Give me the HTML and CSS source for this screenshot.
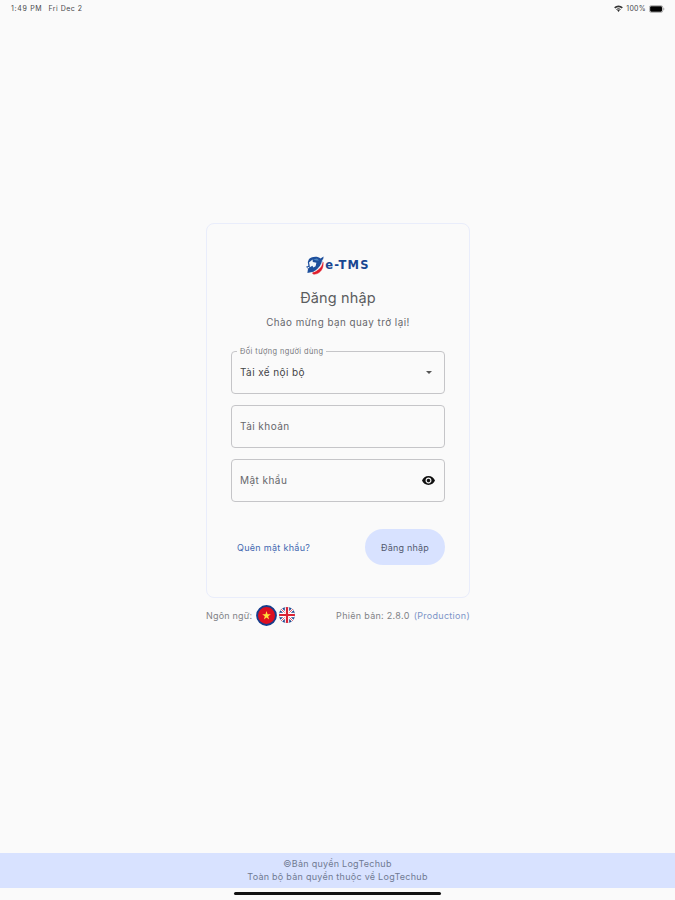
FILE: index.html
```html
<!DOCTYPE html>
<html lang="vi">
<head>
    <meta charset="UTF-8">
    <meta name="viewport" content="width=device-width, initial-scale=1.0">
    <title>e-TMS - Đăng nhập</title>
    <link rel="stylesheet" href="styles.css">
</head>
<body>
    <header class="status-bar">
        <div class="status-left">
            <span class="time">1:49 PM</span>
            <span class="date">Fri Dec 2</span>
        </div>
        <div class="status-right">
            <svg class="wifi" viewBox="0 0 16 12">
                <path d="M8 12 5.6 9.3a3.5 3.5 0 0 1 4.8 0zM3.8 7.6a6.2 6.2 0 0 1 8.4 0l-1 1.1a4.7 4.7 0 0 0-6.4 0zM.2 3.7a11.4 11.4 0 0 1 15.6 0l-2.2 2.5a8.2 8.2 0 0 0-11.2 0z"/>
            </svg>
            <span>100%</span>
            <svg class="battery" viewBox="0 0 17 8">
                <rect x=".4" y=".4" width="14.2" height="7.2" rx="2" fill="none" stroke="#888" stroke-width=".7"/>
                <rect x="1.2" y="1.2" width="12.6" height="5.6" rx="1.2"/>
                <path d="M15.4 2.6c1.2.4 1.2 2.4 0 2.8z" fill="#888"/>
            </svg>
        </div>
    </header>

    <main class="login">
        <form class="card">
            <div class="logo">
                <svg class="logo-mark" viewBox="0 0 18 19">
                    <path d="M3 3C6.500 0 12 0 14.500 2.600L17.600.6c-.4 2.600-.8 5-2 7.200C14 11 11.500 13.500 8.600 15.600L1.400 17l.6-4.200L0 10.800l2.400-1L1.800 6z" fill="#1d4f9c"/>
                    <path d="M3 6.400 6.600 3.600 6.800 6l3.600.8-.8 3.400-2.200 1.200-1-1.600-2.600 1.400L3.600 9z" fill="#f0f5fb"/>
                    <path d="m1 10.800 2.400.4-.8 1.400z" fill="#fafafa"/>
                    <path d="M7 3.600 11 2.400l2.200 2-2.600.2z" fill="#4f87c2"/>
                    <path d="M17 6C16.400 11 12.400 15 6.800 16.600c-.6.8 0 1.600 1.400 1.600C14.500 17.800 18 12 17 6z" fill="#e11d2b" stroke="#e11d2b" stroke-width=".5"/>
                    <path d="M16.600 3.600C15.800 9.200 12.600 13.200 7.800 15.800" fill="none" stroke="#fff" stroke-width=".8"/>
                </svg>
                <span class="logo-text">e-TMS</span>
            </div>
            <h1>Đăng nhập</h1>
            <p class="welcome">Chào mừng bạn quay trở lại!</p>

            <div class="field select-field">
                <span class="field-label">Đối tượng người dùng</span>
                <span class="field-value">Tài xế nội bộ</span>
                <svg class="arrow" viewBox="0 0 6 3"><path d="M0 0h6L3 3z"/></svg>
            </div>
            <div class="field">
                <span class="placeholder">Tài khoản</span>
            </div>
            <div class="field">
                <span class="placeholder">Mật khẩu</span>
                <svg class="eye" viewBox="1 4.5 22 15">
                    <path d="M12 4.5C7 4.5 2.73 7.61 1 12c1.73 4.39 6 7.5 11 7.5s9.27-3.11 11-7.5c-1.73-4.39-6-7.5-11-7.5zM12 17c-2.76 0-5-2.24-5-5s2.24-5 5-5 5 2.24 5 5-2.24 5-5 5zm0-8c-1.66 0-3 1.34-3 3s1.34 3 3 3 3-1.34 3-3-1.34-3-3-3z"/>
                </svg>
            </div>

            <div class="actions">
                <a class="forgot">Quên mật khẩu?</a>
                <button type="button" class="login-btn">Đăng nhập</button>
            </div>
        </form>

        <div class="meta">
            <div class="languages">
                <span class="lang-label">Ngôn ngữ:</span>
                <svg class="flag-vn" viewBox="0 0 20 20">
                    <circle cx="10" cy="10" r="9" fill="#dd0f20" stroke="#163d8c" stroke-width="1.8"/>
                    <path d="m10 5.8 1 3h3.1l-2.5 1.9.9 3-2.5-1.8-2.5 1.8.9-3-2.5-1.9H9z" fill="#ffe03b"/>
                </svg>
                <svg class="flag-uk" viewBox="0 0 16 16">
                    <clipPath id="round"><circle cx="8" cy="8" r="8"/></clipPath>
                    <g clip-path="url(#round)">
                        <path d="M0 0h16v16H0z" fill="#214b91"/>
                        <path d="m0 0 16 16M16 0 0 16" stroke="#fff" stroke-width="2.4"/>
                        <path d="m0 0 16 16M16 0 0 16" stroke="#dc3545" stroke-width=".8"/>
                        <path d="M8 0v16M0 8h16" stroke="#fff" stroke-width="4.4"/>
                        <path d="M8 0v16M0 8h16" stroke="#d92234" stroke-width="2.2"/>
                    </g>
                </svg>
            </div>
            <div class="version">
                <span class="version-number">Phiên bản: 2.8.0</span>
                <span class="env">(Production)</span>
            </div>
        </div>
    </main>

    <footer class="footer">
        <p class="copyright">©Bản quyền LogTechub</p>
        <p class="rights">Toàn bộ bản quyền thuộc về LogTechub</p>
    </footer>
    <div class="home-indicator"></div>
</body>
</html>
```
FILE: styles.css
```css
* {
    box-sizing: border-box;
}

body {
    margin: 0;
    height: 900px;
    display: flex;
    flex-direction: column;
    align-items: center;
    overflow: hidden;
    background: #fafafa;
    color: #66676b;
    font-family: Inter, "Liberation Sans", sans-serif;
    font-size: 9px;
}

h1, p {
    margin: 0;
    font-weight: 400;
}

.status-bar {
    width: 100%;
    height: 17px;
    padding: 0 10px 0 11px;
    display: flex;
    justify-content: space-between;
    align-items: center;
    color: #48484a;
    font-size: 7px;
    letter-spacing: 0.3px;
}

.status-left {
    display: flex;
    gap: 6px;
}

.time {
    letter-spacing: 0.7px;
}

.date {
    letter-spacing: 0.5px;
}

.status-right {
    display: flex;
    align-items: center;
    gap: 3px;
}

.wifi {
    width: 9px;
    height: 7px;
    fill: #333;
}

.battery {
    width: 16px;
    height: 8px;
}

.login {
    width: 264px;
    margin: 206px 0 0 1px;
}

.card {
    height: 375px;
    padding: 31px 24px 0;
    border: 1px solid #e9edfb;
    border-radius: 8px;
    display: flex;
    flex-direction: column;
}

.logo {
    height: 20px;
    display: flex;
    justify-content: center;
    align-items: center;
}

.logo-mark {
    width: 18px;
    height: 19px;
}

.logo-text {
    padding-left: 1px;
    color: #184691;
    font-family: "DejaVu Sans", sans-serif;
    font-size: 11.5px;
    font-weight: 700;
    letter-spacing: 1.2px;
}

h1 {
    margin-top: 12px;
    color: #5c5d60;
    font-size: 14.5px;
    line-height: 22px;
    letter-spacing: 0.15px;
    text-align: center;
}

.welcome {
    margin: 6px 0 21px;
    font-size: 9.8px;
    line-height: 15px;
    letter-spacing: 0.5px;
    text-align: center;
    white-space: nowrap;
}

.field {
    position: relative;
    height: 43px;
    margin-bottom: 11px;
    padding: 0 10px 1px 8px;
    flex: none;
    border: 1px solid #c5c5c8;
    border-radius: 4px;
    display: flex;
    justify-content: space-between;
    align-items: center;
}

.field-label {
    position: absolute;
    top: -6px;
    left: 5px;
    padding: 0 3px;
    background: #fafafa;
    color: #77787c;
    font-size: 7.4px;
    line-height: 12px;
    letter-spacing: 0.42px;
    white-space: nowrap;
}

.field-value {
    color: #434447;
    font-size: 10px;
    letter-spacing: 0.4px;
}

.placeholder {
    font-size: 10px;
    letter-spacing: 0.45px;
}

.arrow {
    width: 6px;
    height: 3px;
    margin-right: 2px;
    fill: #555;
}

.eye {
    width: 13px;
    height: 9px;
    margin-right: -1px;
    fill: #111;
}

.actions {
    margin-top: 16px;
    display: flex;
    justify-content: space-between;
    align-items: center;
}

.forgot {
    padding-left: 6px;
    color: #4268b0;
    font-size: 9px;
    letter-spacing: 0.3px;
}

.login-btn {
    width: 80px;
    height: 36px;
    padding: 0;
    border: none;
    border-radius: 18px;
    background: #d8e2ff;
    color: #535a70;
    font-family: inherit;
    font-size: 9px;
    letter-spacing: 0.2px;
}

.meta {
    height: 34px;
    display: flex;
    justify-content: space-between;
    align-items: center;
    color: #818286;
    white-space: nowrap;
}

.languages, .version {
    display: flex;
    align-items: center;
}

.version {
    gap: 4px;
    letter-spacing: 0.3px;
}

.lang-label {
    letter-spacing: 0.2px;
}

.flag-vn {
    width: 21px;
    height: 21px;
    margin: 0 2px 0 4px;
}

.flag-uk {
    width: 16px;
    height: 16px;
}

.env {
    color: #7c94c7;
}

.footer {
    width: 100%;
    height: 35px;
    margin-top: auto;
    padding-top: 4px;
    background: #d8e2ff;
    color: #707a92;
    line-height: 13px;
    letter-spacing: 0.27px;
    text-align: center;
}

.home-indicator {
    width: 207px;
    height: 3px;
    margin: 4px 0 5px;
    border-radius: 2px;
    background: #111;
}
```
